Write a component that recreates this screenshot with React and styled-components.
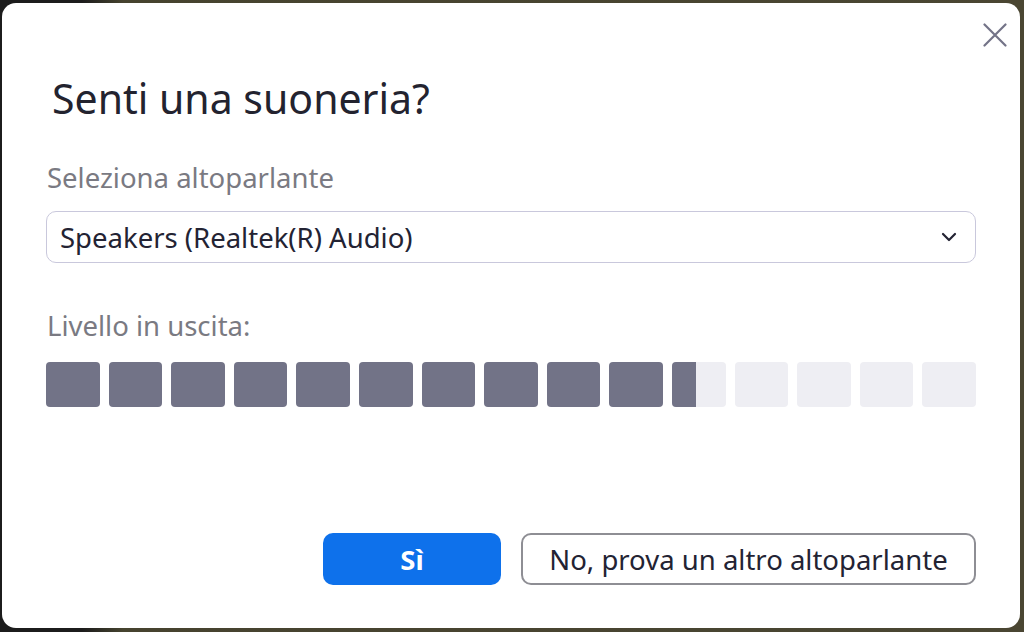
import React from "react";
import styled, { createGlobalStyle } from "styled-components";

const GlobalStyle = createGlobalStyle`
  html, body {
    margin: 0;
    padding: 0;
    background: #1d1d1b;
  }
  body {
    font-family: "Noto Sans", "Open Sans", sans-serif;
  }
`;

const Backdrop = styled.div`
  width: 1024px;
  height: 632px;
  box-sizing: border-box;
  padding: 3px 4px 4px 2px;
  background: linear-gradient(90deg, #1c1c1c 0%, #1c1c1c 8%, #46432f 12%, #4a4632 100%);
  overflow: hidden;
`;

const Dialog = styled.div`
  position: relative;
  height: 100%;
  box-sizing: border-box;
  background: #ffffff;
  border-radius: 14px;
  padding: 0 44px 0 44px;
  display: flex;
  flex-direction: column;
`;

const CloseButton = styled.button`
  position: absolute;
  top: 17px;
  right: 10px;
  width: 30px;
  height: 30px;
  padding: 0;
  border: none;
  background: transparent;
  display: flex;
  align-items: center;
  justify-content: center;
  cursor: pointer;
`;

const Title = styled.h1`
  margin: 70px 0 0 6px;
  font-size: 41px;
  font-weight: 400;
  line-height: 50px;
  color: #23232f;
`;

const FieldLabel = styled.div`
  margin-top: ${(p) => p.$top}px;
  margin-left: 1px;
  font-size: 27.5px;
  line-height: 36px;
  color: #7a7a82;
`;

const Select = styled.div`
  margin-top: 15px;
  height: 52px;
  box-sizing: border-box;
  border: 1.5px solid #c9c8dc;
  border-radius: 10px;
  padding: 0 18px 0 13px;
  display: flex;
  align-items: center;
  justify-content: space-between;
  font-size: 27.5px;
  color: #232333;
`;

const Meter = styled.div`
  margin-top: 18px;
  display: flex;
  gap: 9px;
`;

const Cell = styled.div`
  flex: 1;
  height: 45px;
  border-radius: 4px;
  background: #eeeef3;
  overflow: hidden;
`;

const CellFill = styled.div`
  height: 100%;
  background: #727387;
`;

const Actions = styled.div`
  margin-top: auto;
  margin-bottom: 43px;
  display: flex;
  justify-content: flex-end;
  gap: 20px;
`;

const Button = styled.button`
  height: 52px;
  box-sizing: border-box;
  border-radius: 10px;
  font-family: inherit;
  font-size: 27.5px;
  padding: 0 26px;
  cursor: pointer;
  ${(p) =>
    p.$primary
      ? `
    width: 178px;
    background: #0e71eb;
    border: none;
    color: #ffffff;
    font-weight: 700;
  `
      : `
    width: 455px;
    background: #ffffff;
    border: 2px solid #8e8e94;
    color: #232333;
    font-weight: 400;
  `}
`;

const levels = [1, 1, 1, 1, 1, 1, 1, 1, 1, 1, 0.45, 0, 0, 0, 0];

export default function App() {
  return (
    <>
      <GlobalStyle />
      <Backdrop>
        <Dialog>
          <CloseButton aria-label="Chiudi">
            <svg width="24" height="24" viewBox="0 0 24 24">
              <path
                d="M1.5 1.5 L22.5 22.5 M22.5 1.5 L1.5 22.5"
                stroke="#737387"
                strokeWidth="2.2"
                strokeLinecap="round"
                fill="none"
              />
            </svg>
          </CloseButton>
          <Title>Senti una suoneria?</Title>
          <FieldLabel $top={37}>Seleziona altoparlante</FieldLabel>
          <Select>
            <span>Speakers (Realtek(R) Audio)</span>
            <svg width="16" height="10" viewBox="0 0 16 10">
              <path
                d="M2 2 L8 8 L14 2"
                stroke="#232333"
                strokeWidth="2.2"
                strokeLinecap="round"
                strokeLinejoin="round"
                fill="none"
              />
            </svg>
          </Select>
          <FieldLabel $top={45}>Livello in uscita:</FieldLabel>
          <Meter>
            {levels.map((l, i) => (
              <Cell key={i}>
                <CellFill style={{ width: `${l * 100}%` }} />
              </Cell>
            ))}
          </Meter>
          <Actions>
            <Button $primary>Sì</Button>
            <Button>No, prova un altro altoparlante</Button>
          </Actions>
        </Dialog>
      </Backdrop>
    </>
  );
}
